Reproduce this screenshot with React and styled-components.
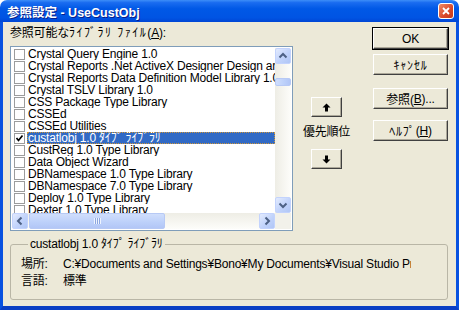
import styled, { createGlobalStyle } from "styled-components";

const GlobalStyle = createGlobalStyle`
  html, body {
    margin: 0;
    padding: 0;
    background: #ffffff;
  }
  body {
    font-family: "Liberation Sans", "Noto Sans CJK JP", sans-serif;
    font-size: 12px;
    letter-spacing: -0.2px;
    color: #000;
  }
`;

const Window = styled.div`
  width: 459px;
  height: 310px;
  display: flex;
  flex-direction: column;
  border-radius: 7px 7px 0 0;
  overflow: hidden;
`;

const TitleBar = styled.div`
  height: 22px;
  flex: none;
  display: flex;
  align-items: center;
  justify-content: space-between;
  padding: 0 5px 0 7px;
  background: linear-gradient(
    #3d8ef8 0%,
    #1a6cf0 12%,
    #0058e6 40%,
    #0054e3 80%,
    #0046d5 100%
  );
`;

const Title = styled.div`
  font-family: "Liberation Sans", "Noto Sans CJK JP", sans-serif;
  font-weight: bold;
  font-size: 12.5px;
  letter-spacing: 0;
  color: #fff;
  text-shadow: 1px 1px #0a1e8a;
`;

const CloseButton = styled.div`
  width: 14px;
  height: 14px;
  border: 1px solid #fff;
  border-radius: 3px;
  background: linear-gradient(135deg, #f08a66, #d8482a 60%, #c23a1c);
  display: flex;
  align-items: center;
  justify-content: center;
`;

const Frame = styled.div`
  flex: 1;
  display: flex;
  flex-direction: column;
  background: #ece9d8;
  border: 3px solid #0852e0;
  border-top: 0;
  border-bottom: 4px solid #0a3fc4;
  padding: 5px 7px 0 7px;
`;

const Top = styled.div`
  display: grid;
  grid-template-columns: 283px 1fr 77px;
`;

const LeftCol = styled.div`
  display: flex;
  flex-direction: column;
`;

const Caption = styled.div`
  height: 13px;
  line-height: 13px;
  white-space: nowrap;
  margin-bottom: 6px;
`;

const Kana = styled.span`
  letter-spacing: ${(p) => p.$spread || 0.8}px;
`;

const ListBox = styled.div`
  box-sizing: border-box;
  width: 283px;
  height: 185px;
  border: 1px solid #7f9db9;
  padding: 1px;
  background: #fff;
  display: grid;
  grid-template-columns: 263px 16px;
  grid-template-rows: 165px 16px;
`;

const Items = styled.div`
  overflow: hidden;
`;

const Item = styled.div`
  height: 12px;
  display: flex;
  align-items: center;
`;

const Check = styled.div`
  box-sizing: border-box;
  width: 11px;
  height: 11px;
  margin: 0 2px;
  border: 1px solid #9c9c9c;
  background: #fff;
  display: flex;
  align-items: center;
  justify-content: center;
  flex: none;
`;

const ItemText = styled.div`
  flex: 1;
  height: 12px;
  line-height: 12px;
  padding-left: 1px;
  white-space: nowrap;
  overflow: hidden;
  background: ${(p) => (p.$selected ? "#316ac5" : "transparent")};
  color: ${(p) => (p.$selected ? "#fff" : "#000")};
  outline: ${(p) => (p.$selected ? "1px dotted #ce953a" : "none")};
  outline-offset: -1px;
`;

const VScroll = styled.div`
  display: flex;
  flex-direction: column;
  background: linear-gradient(to right, #eeede5, #fdfdfa);
`;

const HScroll = styled.div`
  display: flex;
  background: linear-gradient(#eeede5, #fdfdfa);
`;

const Corner = styled.div`
  background: #f2f1ea;
`;

const ScrollBtn = styled.div`
  box-sizing: border-box;
  width: 16px;
  height: 16px;
  flex: none;
  border: 1px solid #c3d3fd;
  border-radius: 2px;
  background: linear-gradient(135deg, #e3ebfe, #c1d3fb 55%, #b0c6f6);
  display: flex;
  align-items: center;
  justify-content: center;
`;

const Track = styled.div`
  flex: 1;
  display: flex;
  flex-direction: ${(p) => (p.$vertical ? "column" : "row")};
`;

const Thumb = styled.div`
  box-sizing: border-box;
  border: 1px solid #b7c9f5;
  border-radius: 2px;
  background: linear-gradient(
    ${(p) => (p.$vertical ? "to right" : "to bottom")},
    #d0defc,
    #bcd0fa 60%,
    #b2c6f6
  );
  display: flex;
  align-items: center;
  justify-content: center;
  ${(p) =>
    p.$vertical
      ? "margin-top: 14px; height: 8px; width: 16px;"
      : "margin-left: 1px; width: 136px; height: 16px;"}
`;

const Grip = styled.div`
  width: 7px;
  height: 6px;
  background: repeating-linear-gradient(
    to right,
    #eef4fe 0 1px,
    #8ca6e0 1px 2px
  );
`;

const MidCol = styled.div`
  display: flex;
  flex-direction: column;
  align-items: center;
  padding: 70px 12px 0 0;
`;

const Priority = styled.div`
  margin: 9px 0 10px;
  line-height: 13px;
`;

const RightCol = styled.div`
  display: flex;
  flex-direction: column;
  align-items: flex-end;
  padding-right: 1px;
`;

const Button = styled.div`
  box-sizing: border-box;
  width: ${(p) => p.$w || 75}px;
  height: ${(p) => p.$h || 21}px;
  margin-top: ${(p) => p.$mt || 0}px;
  background: #ece9d8;
  border: 1px solid;
  border-color: #fff #404040 #404040 #fff;
  box-shadow: inset -1px -1px #aca899;
  outline: ${(p) => (p.$default ? "1px solid #000" : "none")};
  display: flex;
  align-items: center;
  justify-content: center;
  white-space: nowrap;
`;

const Group = styled.fieldset`
  margin: 7px 1px 0 0;
  padding: 5px 10px 9px 10px;
  border: 1px solid #b9b6a6;
  border-radius: 3px;
  min-width: 0;
`;

const Legend = styled.legend`
  margin-left: 7px;
  padding: 0 2px;
  line-height: 13px;
`;

const InfoRow = styled.div`
  display: grid;
  grid-template-columns: 42px 348px;
  height: 17px;
  line-height: 17px;
`;

const Value = styled.div`
  white-space: nowrap;
  overflow: hidden;
`;

const Chevron = ({ dir }) => {
  const rot = { up: 0, right: 90, down: 180, left: 270 }[dir];
  return (
    <svg width="14" height="14" viewBox="0 0 14 14" style={{ transform: `rotate(${rot}deg)` }}>
      <polyline points="3.5,8.5 7,5 10.5,8.5" fill="none" stroke="#4d6185" strokeWidth="2" />
    </svg>
  );
};

const Arrow = ({ down }) => (
  <svg width="9" height="9" viewBox="0 0 9 9" style={{ transform: down ? "rotate(180deg)" : "none" }}>
    <path d="M4.5 0.5 L8.5 4.5 H6 V8.5 H3 V4.5 H0.5 Z" fill="#000" />
  </svg>
);

const items = [
  "Crystal Query Engine 1.0",
  "Crystal Reports .Net ActiveX Designer Design and Runtime Library",
  "Crystal Reports Data Definition Model Library 1.0",
  "Crystal TSLV Library 1.0",
  "CSS Package Type Library",
  "CSSEd",
  "CSSEd Utilities",
  "custatlobj 1.0 ﾀｲﾌﾟ ﾗｲﾌﾞﾗﾘ",
  "CustReg 1.0 Type Library",
  "Data Object Wizard",
  "DBNamespace 1.0 Type Library",
  "DBNamespace 7.0 Type Library",
  "Deploy 1.0 Type Library",
  "Dexter 1.0 Type Library",
];

const selectedIndex = 7;

export default function App() {
  return (
    <>
      <GlobalStyle />
      <Window>
        <TitleBar>
          <Title>参照設定 - UseCustObj</Title>
          <CloseButton>
            <svg width="10" height="10" viewBox="0 0 10 10">
              <path d="M2 2 L8 8 M8 2 L2 8" stroke="#fff" strokeWidth="1.8" />
            </svg>
          </CloseButton>
        </TitleBar>
        <Frame>
          <Top>
            <LeftCol>
              <Caption>
                参照可能な<Kana $spread={1.5}>ﾗｲﾌﾞﾗﾘ ﾌｧｲﾙ</Kana>(<u>A</u>):
              </Caption>
              <ListBox>
                <Items>
                  {items.map((name, i) => (
                    <Item key={name}>
                      <Check>
                        {i === selectedIndex && (
                          <svg width="9" height="9" viewBox="0 0 9 9">
                            <polyline points="1.5,4 3.5,6.5 7.5,1.5" fill="none" stroke="#000" strokeWidth="1.7" />
                          </svg>
                        )}
                      </Check>
                      <ItemText $selected={i === selectedIndex}>{name}</ItemText>
                    </Item>
                  ))}
                </Items>
                <VScroll>
                  <ScrollBtn>
                    <Chevron dir="up" />
                  </ScrollBtn>
                  <Track $vertical>
                    <Thumb $vertical />
                  </Track>
                  <ScrollBtn>
                    <Chevron dir="down" />
                  </ScrollBtn>
                </VScroll>
                <HScroll>
                  <ScrollBtn>
                    <Chevron dir="left" />
                  </ScrollBtn>
                  <Track>
                    <Thumb>
                      <Grip />
                    </Thumb>
                  </Track>
                  <ScrollBtn>
                    <Chevron dir="right" />
                  </ScrollBtn>
                </HScroll>
                <Corner />
              </ListBox>
            </LeftCol>
            <MidCol>
              <Button $w={31} $h={20}>
                <Arrow />
              </Button>
              <Priority>優先順位</Priority>
              <Button $w={31} $h={20}>
                <Arrow down />
              </Button>
            </MidCol>
            <RightCol>
              <Button $default $mt={1}>OK</Button>
              <Button $mt={5}>
                <Kana>ｷｬﾝｾﾙ</Kana>
              </Button>
              <Button $mt={13}>
                参照(<u>B</u>)...
              </Button>
              <Button $mt={11}>
                <Kana>ﾍﾙﾌﾟ</Kana>(<u>H</u>)
              </Button>
            </RightCol>
          </Top>
          <Group>
            <Legend>custatlobj 1.0 ﾀｲﾌﾟ ﾗｲﾌﾞﾗﾘ</Legend>
            <InfoRow>
              <span>場所:</span>
              <Value>C:¥Documents and Settings¥Bono¥My Documents¥Visual Studio Projects¥UseCustObj</Value>
            </InfoRow>
            <InfoRow>
              <span>言語:</span>
              <Value>標準</Value>
            </InfoRow>
          </Group>
        </Frame>
      </Window>
    </>
  );
}
